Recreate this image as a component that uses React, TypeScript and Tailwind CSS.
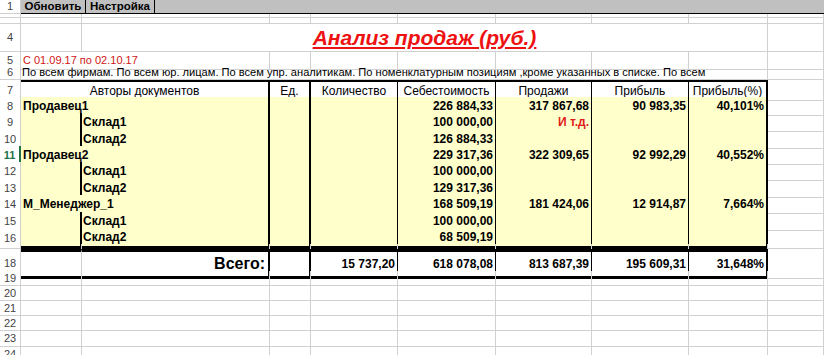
import React from 'react'

const COLS = 'grid grid-cols-[21px_61px_188px_41px_87px_98px_96px_97px_79px_1fr]'

type Line = {
  n: number
  kind: 'main' | 'sub'
  name: string
  cost: string
  sales?: string
  profit?: string
  pct?: string
  note?: boolean
  h: string
  active?: boolean
  last?: boolean
}

const lines: Line[] = [
  { n: 8, kind: 'main', name: 'Продавец1', cost: '226 884,33', sales: '317 867,68', profit: '90 983,35', pct: '40,101%', h: 'h-[16px]' },
  { n: 9, kind: 'sub', name: 'Склад1', cost: '100 000,00', sales: 'И т.д.', note: true, h: 'h-[17px]' },
  { n: 10, kind: 'sub', name: 'Склад2', cost: '126 884,33', h: 'h-[16px]' },
  { n: 11, kind: 'main', name: 'Продавец2', cost: '229 317,36', sales: '322 309,65', profit: '92 992,29', pct: '40,552%', h: 'h-[16px]', active: true },
  { n: 12, kind: 'sub', name: 'Склад1', cost: '100 000,00', h: 'h-[17px]' },
  { n: 13, kind: 'sub', name: 'Склад2', cost: '129 317,36', h: 'h-[16px]' },
  { n: 14, kind: 'main', name: 'М_Менеджер_1', cost: '168 509,19', sales: '181 424,06', profit: '12 914,87', pct: '7,664%', h: 'h-[17px]' },
  { n: 15, kind: 'sub', name: 'Склад1', cost: '100 000,00', h: 'h-[16px]' },
  { n: 16, kind: 'sub', name: 'Склад2', cost: '68 509,19', h: 'h-[16px]', last: true },
]

function RowNo({ n, active }: { n?: number; active?: boolean }) {
  return (
    <div
      className={
        active
          ? 'flex items-center justify-center overflow-hidden border-r-2 border-b border-r-[#217346] border-b-[#d0d0d0] bg-white text-[11px] font-bold text-[#217346]'
          : 'flex items-center justify-center overflow-hidden border-r border-b border-[#d0d0d0] bg-white text-[11px] text-[#444]'
      }
    >
      {n}
    </div>
  )
}

function Blank({ span }: { span?: string }) {
  return <div className={`border-r border-b border-[#d0d0d0] ${span ?? ''}`} />
}

function GridRow({ n, h }: { n?: number; h: string }) {
  return (
    <div className={`${COLS} ${h}`}>
      <RowNo n={n} />
      {Array.from({ length: 9 }).map((_, i) => (
        <Blank key={i} />
      ))}
    </div>
  )
}

function Num({ v, red }: { v?: string; red?: boolean }) {
  return (
    <div
      className={`flex h-full items-center justify-end overflow-hidden pr-[2px] font-bold whitespace-nowrap ${
        red ? 'text-[#e01b1b]' : 'text-black'
      }`}
    >
      {v}
    </div>
  )
}

export default function App() {
  return (
    <div className="h-[355px] w-[824px] overflow-hidden bg-white font-['Liberation_Sans',Arial,sans-serif] text-[12px] text-black">
      {/* row 1: toolbar */}
      <div className={`${COLS} h-[14px]`}>
        <RowNo n={1} />
        <div className="col-span-9 flex border-b border-black bg-[#c0c0c0]">
          <div className="flex w-[65px] items-center justify-center border-r border-black text-[11.5px] leading-none font-bold">
            Обновить
          </div>
          <div className="flex w-[69px] items-center justify-center border-r border-black text-[11.5px] leading-none font-bold">
            Настройка
          </div>
        </div>
      </div>

      <GridRow h="h-[4px]" />
      <GridRow h="h-[6px]" />

      {/* row 4: title */}
      <div className={`${COLS} h-[28px]`}>
        <RowNo n={4} />
        <Blank />
        <div className="col-span-7 flex items-end justify-center border-r border-b border-[#d0d0d0] pb-[1px]">
          <span className="text-[21px] leading-[24px] font-bold text-[#ee1111] italic underline decoration-2 underline-offset-2">
            Анализ продаж (руб.)
          </span>
        </div>
        <Blank />
      </div>

      {/* row 5: period */}
      <div className={`${COLS} h-[14px]`}>
        <RowNo n={5} />
        <div className="col-span-2 flex items-center border-r border-b border-[#d0d0d0] pl-[2px] text-[11px] text-[#d01515]">
          С 01.09.17 по 02.10.17
        </div>
        {Array.from({ length: 7 }).map((_, i) => (
          <Blank key={i} />
        ))}
      </div>

      {/* row 6: filters */}
      <div className={`${COLS} h-[14px]`}>
        <RowNo n={6} />
        <div className="col-span-8 flex items-center overflow-hidden border-r border-b border-[#d0d0d0] pl-[1px] text-[11.1px] whitespace-nowrap">
          По всем фирмам. По всем юр. лицам. По всем упр. аналитикам. По номенклатурным позициям ,кроме указанных в списке. По всем
        </div>
        <Blank />
      </div>

      {/* row 7: header */}
      <div className={`${COLS} h-[17px]`}>
        <RowNo n={7} />
        <div className="col-span-2 flex items-center justify-center border-t-2 border-r-2 border-b border-black">Авторы документов</div>
        <div className="flex items-center justify-center border-t-2 border-r-2 border-b border-black">Ед.</div>
        <div className="flex items-center justify-center border-t-2 border-r border-b border-black">Количество</div>
        <div className="flex items-center justify-center overflow-hidden border-t-2 border-r border-b border-black whitespace-nowrap">Себестоимость</div>
        <div className="flex items-center justify-center border-t-2 border-r border-b border-black">Продажи</div>
        <div className="flex items-center justify-center border-t-2 border-r border-b border-black">Прибыль</div>
        <div className="flex items-center justify-center overflow-hidden border-t-2 border-r-2 border-b border-black whitespace-nowrap">Прибыль(%)</div>
        <Blank />
      </div>

      {/* rows 8-16: data */}
      {lines.map((l) => {
        const b = l.last ? 'border-b-[3px]' : 'border-b'
        return (
          <div key={l.n} className={`${COLS} ${l.h}`}>
            <RowNo n={l.n} active={l.active} />
            {l.kind === 'main' ? (
              <div className={`col-span-2 flex items-center border-r-2 border-black bg-[#ffffcc] pl-[2px] font-bold whitespace-nowrap ${b}`}>
                {l.name}
              </div>
            ) : (
              <>
                <div className={`border-r-2 border-black bg-[#ffffcc] ${b}`} />
                <div className={`flex items-center border-r-2 border-black bg-[#ffffcc] pl-[1px] font-bold ${b}`}>{l.name}</div>
              </>
            )}
            <div className={`border-r-2 border-black bg-[#ffffcc] ${b}`} />
            <div className={`border-r border-black bg-[#ffffcc] ${b}`} />
            <div className={`border-r border-black bg-[#ffffcc] ${b}`}>
              <Num v={l.cost} />
            </div>
            <div className={`border-r border-black bg-[#ffffcc] ${b}`}>
              <Num v={l.sales} red={l.note} />
            </div>
            <div className={`border-r border-black bg-[#ffffcc] ${b}`}>
              <Num v={l.profit} />
            </div>
            <div className={`border-r-2 border-black bg-[#ffffcc] ${b}`}>
              <Num v={l.pct} />
            </div>
            <Blank />
          </div>
        )
      })}

      {/* row 17: spacer */}
      <div className={`${COLS} h-[5px]`}>
        <div className="border-r border-[#d0d0d0]" />
        {Array.from({ length: 9 }).map((_, i) => (
          <div key={i} className="border-r border-[#d0d0d0]" />
        ))}
      </div>

      {/* row 18: total */}
      <div className={`${COLS} h-[22px]`}>
        <RowNo n={18} />
        <div className="border-t-[3px] border-r border-b-[3px] border-black border-r-[#d0d0d0]" />
        <div className="flex items-center justify-end border-t-[3px] border-r-2 border-b-[3px] border-black pr-[3px] text-[16px] font-bold">
          Всего:
        </div>
        <div className="border-t-[3px] border-r-2 border-b-[3px] border-black" />
        <div className="border-t-[3px] border-r border-b-[3px] border-black">
          <Num v="15 737,20" />
        </div>
        <div className="border-t-[3px] border-r border-b-[3px] border-black">
          <Num v="618 078,08" />
        </div>
        <div className="border-t-[3px] border-r border-b-[3px] border-black">
          <Num v="813 687,39" />
        </div>
        <div className="border-t-[3px] border-r border-b-[3px] border-black">
          <Num v="195 609,31" />
        </div>
        <div className="border-t-[3px] border-r-2 border-b-[3px] border-black">
          <Num v="31,648%" />
        </div>
        <Blank />
      </div>

      <GridRow n={19} h="h-[15px]" />
      <GridRow n={20} h="h-[15px]" />
      <GridRow n={21} h="h-[15px]" />
      <GridRow n={22} h="h-[15px]" />
      <GridRow n={23} h="h-[16px]" />
      <GridRow n={24} h="h-[15px]" />
    </div>
  )
}
